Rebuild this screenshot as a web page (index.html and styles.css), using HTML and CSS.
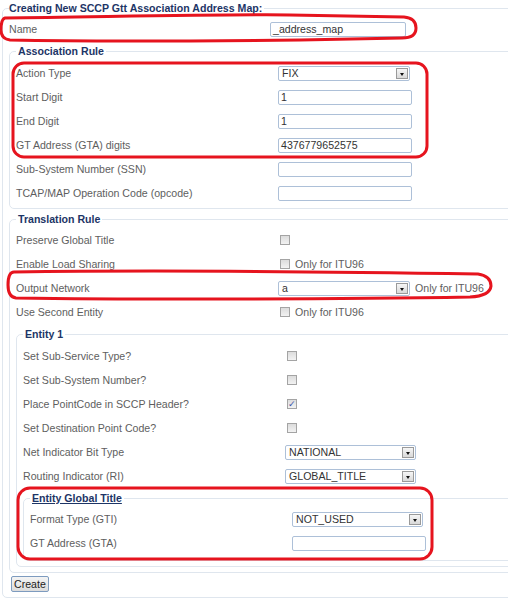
FILE: index.html
```html
<!DOCTYPE html>
<html>
<head>
<meta charset="utf-8">
<link rel="stylesheet" href="styles.css">
</head>
<body>
<div class="page">
<fieldset class="fs outer">
  <legend class="lg">Creating New SCCP Gtt Association Address Map:</legend>
  <div class="row"><span class="lbl">Name</span><span class="field">_address_map</span></div>

  <fieldset class="fs assoc">
    <legend class="lg">Association Rule</legend>
    <div class="row"><span class="lbl">Action Type</span><span class="select"><span class="val">FIX</span><span class="arrow"></span></span></div>
    <div class="row"><span class="lbl">Start Digit</span><span class="field">1</span></div>
    <div class="row"><span class="lbl">End Digit</span><span class="field">1</span></div>
    <div class="row"><span class="lbl">GT Address (GTA) digits</span><span class="field">4376779652575</span></div>
    <div class="row"><span class="lbl">Sub-System Number (SSN)</span><span class="field"></span></div>
    <div class="row"><span class="lbl">TCAP/MAP Operation Code (opcode)</span><span class="field"></span></div>
  </fieldset>

  <fieldset class="fs trans">
    <legend class="lg">Translation Rule</legend>
    <div class="row"><span class="lbl">Preserve Global Title</span><span class="ctl"><span class="cb"></span></span></div>
    <div class="row"><span class="lbl">Enable Load Sharing</span><span class="ctl"><span class="cb"></span><span class="note">Only for ITU96</span></span></div>
    <div class="row"><span class="lbl">Output Network</span><span class="ctl"><span class="select"><span class="val">a</span><span class="arrow"></span></span><span class="note">Only for ITU96</span></span></div>
    <div class="row"><span class="lbl">Use Second Entity</span><span class="ctl"><span class="cb"></span><span class="note">Only for ITU96</span></span></div>

    <fieldset class="fs entity">
      <legend class="lg">Entity 1</legend>
      <div class="row"><span class="lbl">Set Sub-Service Type?</span><span class="ctl"><span class="cb"></span></span></div>
      <div class="row"><span class="lbl">Set Sub-System Number?</span><span class="ctl"><span class="cb"></span></span></div>
      <div class="row"><span class="lbl">Place PointCode in SCCP Header?</span><span class="ctl"><span class="cb checked">&#10003;</span></span></div>
      <div class="row"><span class="lbl">Set Destination Point Code?</span><span class="ctl"><span class="cb"></span></span></div>
      <div class="row"><span class="lbl">Net Indicator Bit Type</span><span class="select narrow"><span class="val">NATIONAL</span><span class="arrow"></span></span></div>
      <div class="row"><span class="lbl">Routing Indicator (RI)</span><span class="select narrow"><span class="val">GLOBAL_TITLE</span><span class="arrow"></span></span></div>

      <fieldset class="fs egt">
        <legend class="lg u">Entity Global Title</legend>
        <div class="row"><span class="lbl">Format Type (GTI)</span><span class="select narrow"><span class="val">NOT_USED</span><span class="arrow"></span></span></div>
        <div class="row"><span class="lbl">GT Address (GTA)</span><span class="field"></span></div>
      </fieldset>
    </fieldset>
  </fieldset>

  <button class="btn" type="button">Create</button>
</fieldset>

<svg class="marks" width="508" height="599" viewBox="0 0 508 599">
  <path d="M5 18 C 100 17, 230 14, 290 15 L 404 17 Q 416 18 416 28 Q 416 38 402 38 L 300 40 C 200 41, 60 41, 10 40 Q 1 39 1 30 Q 1 19 5 18 Z"/>
  <rect x="13" y="63" width="414" height="94" rx="11" ry="11"/>
  <path d="M14 272 C 150 270, 350 272, 478 274 Q 491 276 491 286 Q 490 296 470 297 C 350 299, 150 300, 16 298 Q 8 297 8 285 Q 8 272 14 272 Z"/>
  <rect x="18" y="488" width="414" height="71" rx="12" ry="12"/>
</svg>
</div>
</body>
</html>
```
FILE: styles.css
```css
html, body {
  margin: 0;
  padding: 0;
  background: #fff;
  overflow: hidden;
}

.page {
  position: relative;
  width: 508px;
  height: 599px;
  overflow: hidden;
  font-family: "Liberation Sans", Arial, sans-serif;
  font-size: 10.6px;
  color: #5e5e5e;
}

.fs {
  margin: 0;
  padding: 2px 6px 3px;
  border: 1px solid #dfe6ee;
  border-radius: 5px;
  min-width: 0;
}

.outer {
  margin: 1px 0 0 2px;
  width: 540px;
  box-sizing: border-box;
  padding: 2px 6px 5px;
}

.assoc { margin-top: 3px; padding-top: 3px; }
.trans { margin-top: 3px; padding-top: 2px; padding-bottom: 5px; }
.entity { margin-top: 3px; padding-top: 3px; padding-bottom: 5px; }
.egt { margin-top: 3px; padding-top: 2px; padding-bottom: 5px; }

.lg {
  padding: 0 2px;
  font-weight: bold;
  font-size: 10.6px;
  line-height: 14px;
  color: #1d3566;
}

.outer > .lg { padding-left: 0; }

.lg.u { text-decoration: underline; }

.row {
  display: grid;
  grid-template-columns: 262px auto;
  align-items: center;
  height: 24px;
}

.lbl { white-space: nowrap; }

.ctl {
  display: flex;
  align-items: center;
  gap: 5px;
}

.field {
  box-sizing: border-box;
  width: 134px;
  height: 15px;
  border: 1px solid #adc0d8;
  border-radius: 2px;
  padding: 0 2px;
  line-height: 13px;
  color: #333;
  background: #fff;
}

.outer > .row .field { width: 136px; margin-left: -1px; }

.select {
  box-sizing: border-box;
  width: 132px;
  height: 15px;
  border: 1px solid #adc0d8;
  border-radius: 2px;
  padding: 0 1px 0 3px;
  display: flex;
  align-items: center;
  justify-content: space-between;
  color: #333;
  background: #fff;
  line-height: 13px;
}

.select.narrow { width: 131px; }

.arrow {
  box-sizing: border-box;
  width: 12px;
  height: 11px;
  border: 1px solid #9a9a9a;
  background: linear-gradient(#f6f6f6, #d9d9d9);
  position: relative;
  flex: none;
}

.arrow::after {
  content: "";
  position: absolute;
  left: 3px;
  top: 4px;
  border-left: 2.5px solid transparent;
  border-right: 2.5px solid transparent;
  border-top: 3px solid #111;
}

.cb {
  box-sizing: border-box;
  width: 10px;
  height: 10px;
  margin-left: 2px;
  border: 1px solid #a4a4a4;
  background: linear-gradient(#dcdcdc, #f2f2f2);
  display: inline-flex;
  align-items: center;
  justify-content: center;
  font-size: 9px;
  line-height: 1;
  color: #3b4fa8;
}

.note { color: #5e5e5e; }

.btn {
  margin: 3px 0 0 2px;
  height: 16px;
  padding: 0 2px;
  font-family: "Liberation Sans", Arial, sans-serif;
  font-size: 10.6px;
  color: #222;
  border: 1px solid #7d9bbf;
  border-radius: 2px;
  background: linear-gradient(#f4f4f4, #dcdcdc);
  line-height: 14px;
  display: block;
}

.marks {
  position: absolute;
  left: 0;
  top: 0;
  pointer-events: none;
}

.marks path, .marks rect {
  fill: none;
  stroke: #e6141e;
  stroke-width: 3;
}
```
